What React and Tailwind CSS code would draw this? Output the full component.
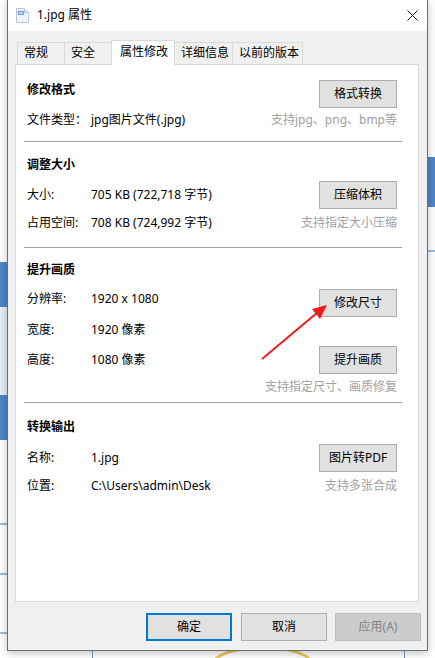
import React from "react";

const Btn = ({ children }) => (
  <div className="w-[78px] h-[28px] shrink-0 bg-[#e1e1e1] border border-[#adadad] flex items-center justify-center text-[12px] leading-[16px] text-black">
    {children}
  </div>
);

const Row = ({ label, value }) => (
  <div className="flex items-center leading-[16px] text-black">
    <span className="w-[64px] shrink-0">{label}</span>
    <span>{value}</span>
  </div>
);

const Hint = ({ children }) => (
  <span className="text-[#a0a0a0] leading-[16px]">{children}</span>
);

const Sep = ({ className }) => <div className={"h-px bg-[#a0a0a0] " + className} />;

const Tab = ({ w, children, active }) =>
  active ? (
    <div
      className={`relative z-10 -mb-px h-[25px] ${w} -ml-px bg-white border-x border-t border-[#d9d9d9] pl-[8px] pt-[3px] leading-[16px] text-black`}
    >
      {children}
    </div>
  ) : (
    <div
      className={`h-[22px] ${w} -ml-px first:ml-0 bg-[#f0f0f0] border-x border-t border-[#d9d9d9] pl-[6px] pt-[2px] leading-[16px] text-black`}
    >
      {children}
    </div>
  );

export default function App() {
  return (
    <div className="relative w-[435px] h-[658px] bg-white overflow-hidden font-['Noto_Sans','Noto_Sans_CJK_SC',sans-serif] text-[12px]">
      {/* desktop background bits */}
      <div className="absolute left-0 top-[262px] w-[8px] h-[45px] bg-[#4f86c6]" />
      <div className="absolute left-0 top-[307px] w-[8px] h-[88px] bg-[#e9eef4]" />
      <div className="absolute left-0 top-[395px] w-[8px] h-[45px] bg-[#4f86c6]" />
      <div className="absolute left-0 top-[523px] w-[8px] h-[2px] bg-[#9bbbe0]" />
      <div className="absolute left-0 top-[573px] w-[8px] h-[2px] bg-[#9bbbe0]" />
      <div className="absolute left-0 top-[632px] w-[8px] h-[2px] bg-[#9bbbe0]" />
      <div className="absolute left-[428px] top-[157px] w-[7px] h-[50px] bg-[#4f86c6]" />
      <div className="absolute left-[428px] top-[250px] w-[7px] h-[2px] bg-[#9bbbe0]" />
      <div className="absolute left-[210px] top-[646px] w-[105px] h-[40px] rounded-[50%] border-[3px] border-[#e8c65a]" />
      <div className="absolute left-[92px] top-[651px] w-px h-[7px] bg-[#6f8fb8]" />
      <div className="absolute left-[404px] top-[651px] w-px h-[7px] bg-[#6f8fb8]" />

      {/* window */}
      <div className="relative ml-[7px] w-[421px] h-[651px] bg-[#f0f0f0] border-x border-b border-[#6f6f6f] shadow-[0_2px_8px_rgba(0,0,0,0.25)]">
        {/* title bar */}
        <div className="h-[31px] bg-white flex items-center relative">
          <svg className="absolute left-[8px] top-[8px]" width="13" height="15" viewBox="0 0 13 15">
            <path d="M0.5 0.5 H8.5 L12.5 4.5 V14.5 H0.5 Z" fill="#eef3fa" stroke="#b9c6d8" />
            <path d="M8.5 0.5 V4.5 H12.5" fill="#dfe7f2" stroke="#b9c6d8" />
            <rect x="2" y="3" width="6" height="4" fill="#6f9fdc" />
            <rect x="3" y="4" width="4" height="2" fill="#b9d2f0" />
          </svg>
          <span className="absolute left-[29px] top-[7px] leading-[16px] text-black">1.jpg 属性</span>
          <svg className="absolute left-[399px] top-[10px]" width="11" height="11" viewBox="0 0 11 11">
            <path d="M0.5 0.5 L10.5 10.5 M10.5 0.5 L0.5 10.5" stroke="#111" strokeWidth="1" />
          </svg>
        </div>

        {/* tabs */}
        <div className="mt-[9px] h-[24px] flex items-end pl-[9px]">
          <Tab w="w-[48px]">常规</Tab>
          <Tab w="w-[48px]">安全</Tab>
          <Tab w="w-[64px]" active>属性修改</Tab>
          <Tab w="w-[59px]">详细信息</Tab>
          <Tab w="w-[71px]">以前的版本</Tab>
        </div>

        {/* panel */}
        <div className="ml-[7px] w-[404px] h-[538px] bg-white border border-[#d9d9d9]">
          <div className="ml-[8px] w-[378px]">
            {/* section 1 */}
            <div className="pl-[3px] pr-[5px] pt-[15px]">
              <div className="flex justify-between items-start h-[28px]">
                <div className="mt-[2px] font-bold leading-[16px] text-black">修改格式</div>
                <Btn>格式转换</Btn>
              </div>
              <div className="flex items-center justify-between h-[24px]">
                <Row label="文件类型：" value="jpg图片文件(.jpg)" />
                <Hint>支持jpg、png、bmp等</Hint>
              </div>
            </div>
            <Sep className="mt-[9px]" />

            {/* section 2 */}
            <div className="pl-[3px] pr-[5px] pt-[15px]">
              <div className="font-bold leading-[16px] text-black">调整大小</div>
              <div className="mt-[8px] flex items-center justify-between h-[28px]">
                <Row label="大小:" value="705 KB (722,718 字节)" />
                <Btn>压缩体积</Btn>
              </div>
              <div className="mt-[6px] flex items-center justify-between h-[16px]">
                <Row label="占用空间:" value="708 KB (724,992 字节)" />
                <Hint>支持指定大小压缩</Hint>
              </div>
            </div>
            <Sep className="mt-[16px]" />

            {/* section 3 */}
            <div className="pl-[3px] pr-[5px] pt-[14px]">
              <div className="font-bold leading-[16px] text-black">提升画质</div>
              <div className="mt-[11px] flex items-start justify-between h-[28px]">
                <div className="mt-[2px]">
                  <Row label="分辨率:" value="1920 x 1080" />
                </div>
                <Btn>修改尺寸</Btn>
              </div>
              <div className="mt-[5px] h-[16px]">
                <Row label="宽度:" value="1920 像素" />
              </div>
              <div className="mt-[8px] flex items-center justify-between h-[28px]">
                <Row label="高度:" value="1080 像素" />
                <Btn>提升画质</Btn>
              </div>
              <div className="mt-[5px] h-[16px] flex justify-end">
                <Hint>支持指定尺寸、画质修复</Hint>
              </div>
            </div>
            <Sep className="mt-[7px]" />

            {/* section 4 */}
            <div className="pl-[3px] pr-[5px] pt-[16px]">
              <div className="font-bold leading-[16px] text-black">转换输出</div>
              <div className="mt-[9px] flex items-center justify-between h-[28px]">
                <Row label="名称:" value="1.jpg" />
                <Btn>图片转PDF</Btn>
              </div>
              <div className="mt-[6px] flex items-center justify-between h-[16px]">
                <Row label="位置:" value="C:\Users\admin\Desk" />
                <Hint>支持多张合成</Hint>
              </div>
            </div>
          </div>
        </div>

        {/* bottom buttons */}
        <div className="mt-[11px] flex justify-end pr-[6px]">
          <div className="w-[86px] h-[28px] bg-[#e1e1e1] border-2 border-[#0078d7] flex items-center justify-center leading-[16px] text-black">
            确定
          </div>
          <div className="ml-[9px] w-[86px] h-[28px] bg-[#e1e1e1] border border-[#adadad] flex items-center justify-center leading-[16px] text-black">
            取消
          </div>
          <div className="ml-[8px] w-[86px] h-[28px] bg-[#cccccc] border border-[#bfbfbf] flex items-center justify-center leading-[16px] text-[#838383]">
            应用(A)
          </div>
        </div>
      </div>

      {/* red arrow */}
      <svg className="absolute left-0 top-0 pointer-events-none" width="435" height="658" viewBox="0 0 435 658">
        <line x1="262" y1="359" x2="318" y2="312" stroke="#ee1c1c" strokeWidth="2" />
        <polygon points="327,305 320,319 312,309" fill="#ee1c1c" />
      </svg>
    </div>
  );
}
